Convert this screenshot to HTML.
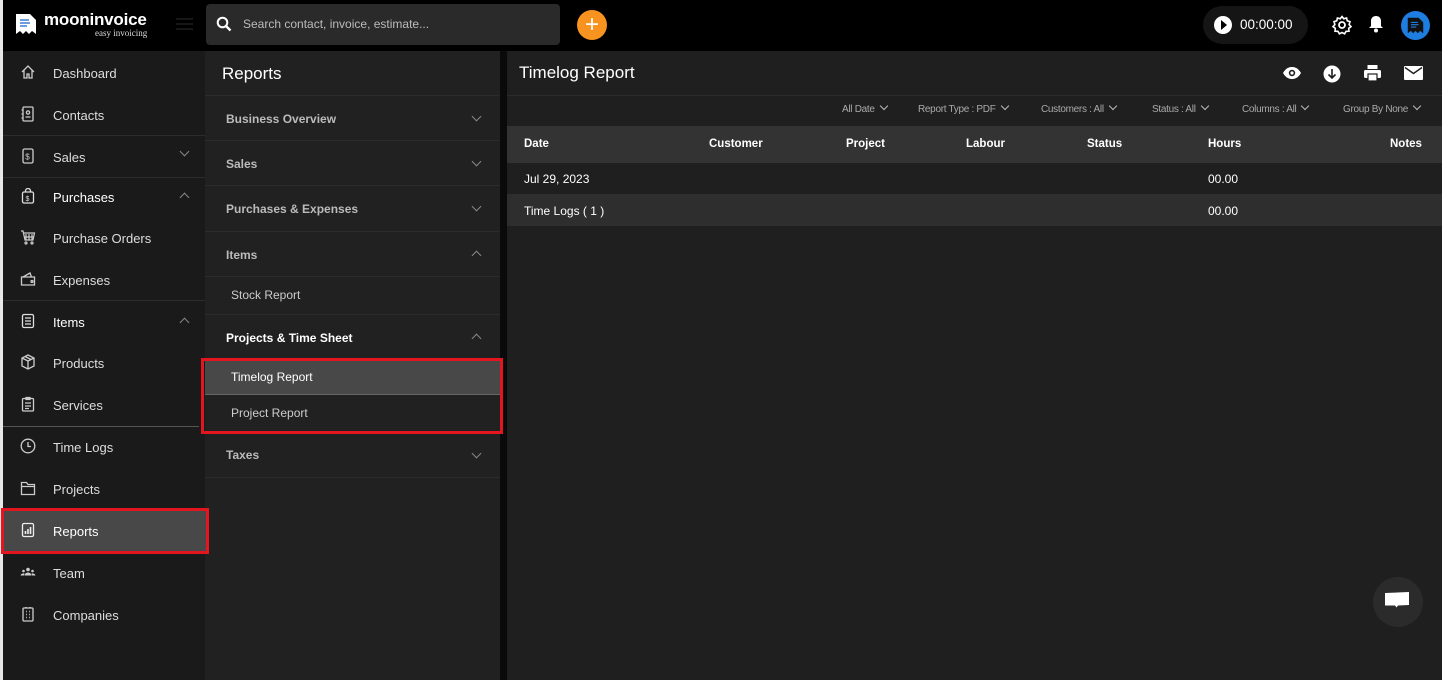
<!DOCTYPE html>
<html><head><meta charset="utf-8"><style>
*{margin:0;padding:0;box-sizing:border-box}
body{width:1442px;height:680px;background:#1f1f1f;font-family:"Liberation Sans",sans-serif;position:relative;overflow:hidden;color:#ddd}
.a{position:absolute}
.top{left:0;top:0;width:1442px;height:51px;background:#000}
.side{left:3px;top:51px;width:202px;height:629px;background:#1a1a1a}
.strip{left:0;top:0;width:3px;height:680px;background:#e8e8e8}
.menu{left:205px;top:51px;width:295px;height:629px;background:#212121}
.div{left:500px;top:51px;width:7px;height:629px;background:#0a0a0a}
.si{position:absolute;left:0;width:202px;height:42px;font-size:13px;color:#ddd}
.si span{position:absolute;left:50px;top:14px}
.si svg{position:absolute;left:17px;top:12px}
.chev{position:absolute;width:7px;height:7px;border-right:1.3px solid #888;border-bottom:1.3px solid #888}
.dn{transform:rotate(45deg)}
.up{transform:rotate(-135deg)}
.mi{position:absolute;left:0;width:295px;height:45px;border-bottom:1px solid #2c2c2c;font-size:12px;font-weight:bold;color:#bbb}
.mi span{position:absolute;left:21px;top:16px}
.mi .chev{left:268px;top:17px}
.th{font-size:11.5px;font-weight:bold;color:#fff;position:absolute;top:138px}
.f{position:absolute;top:104px;font-size:10px;color:#aaa;letter-spacing:-.3px}
.f::after{content:"";display:inline-block;width:5px;height:5px;border-right:1.4px solid #bbb;border-bottom:1.4px solid #bbb;transform:rotate(45deg);margin-left:6px;position:relative;top:-3px}
</style></head><body>
<div class="a top"></div>
<div class="a side"></div>
<div class="a strip"></div>
<div class="a menu"></div>
<div class="a div"></div>

<svg class="a" style="left:15px;top:13px" width="22" height="22" viewBox="0 0 22 22"><path d="M1 1h14l6 6v14l-4-3-3 3-3-3-3 3-3-3-4 3z" fill="#fff"/><path d="M5 7h9M5 10h10M5 13h7" stroke="#3b7dd8" stroke-width="1.5"/></svg>
<div class="a" style="left:44px;top:10px;font-size:17px;font-weight:bold;color:#fff;letter-spacing:-.2px">mooninvoice</div>
<div class="a" style="left:95px;top:28px;font-size:9px;color:#ddd;font-family:'Liberation Serif',serif">easy invoicing</div>
<div class="a" style="left:176px;top:18px;width:17px;height:2px;background:#161616;box-shadow:0 5px 0 #161616,0 10px 0 #161616"></div>
<div class="a" style="left:206px;top:4px;width:354px;height:41px;background:#2a2a2a;border-radius:4px"></div>
<svg class="a" style="left:216px;top:16px" width="16" height="16" viewBox="0 0 16 16"><circle cx="6.5" cy="6.5" r="4.8" stroke="#fff" stroke-width="2" fill="none"/><path d="M10 10l4.5 4.5" stroke="#fff" stroke-width="2.4"/></svg>
<div class="a" style="left:243px;top:17px;font-size:12px;color:#bbb">Search contact, invoice, estimate...</div>
<div class="a" style="left:577px;top:10px;width:30px;height:30px;border-radius:50%;background:#f7931e;color:#fff;font-size:24px;line-height:29px;text-align:center">+</div>
<div class="a" style="left:1203px;top:6px;width:105px;height:38px;border-radius:19px;background:#151515"></div>
<div class="a" style="left:1214px;top:16px;width:18px;height:18px;border-radius:50%;background:#fff"></div>
<div class="a" style="left:1221px;top:20px;width:0;height:0;border-left:6px solid #000;border-top:5px solid transparent;border-bottom:5px solid transparent"></div>
<div class="a" style="left:1240px;top:17px;font-size:13.5px;color:#fff">00:00:00</div>
<svg class="a" style="left:1332px;top:15px" width="20" height="20" viewBox="0 0 20 20"><circle cx="10" cy="10" r="3" stroke="#fff" stroke-width="1.8" fill="none"/><path d="M10 1.5l1.8 2.3 2.8-.8.6 2.8 2.8.9-.9 2.8 1.9 2.1-2.3 1.7.3 2.9-2.9.1-1.5 2.5-2.6-1.3-2.6 1.3-1.5-2.5-2.9-.1.3-2.9-2.3-1.7 1.9-2.1-.9-2.8 2.8-.9.6-2.8 2.8.8z" stroke="#fff" stroke-width="1.6" fill="none"/></svg>
<svg class="a" style="left:1368px;top:15px" width="16" height="18" viewBox="0 0 16 18"><path d="M8 1c3 0 5 2 5 5v5l2 2H1l2-2V6c0-3 2-5 5-5z" fill="#fff"/><circle cx="8" cy="15.5" r="2" fill="#fff"/></svg>
<div class="a" style="left:1401px;top:11px;width:29px;height:29px;border-radius:50%;background:#1e7de0"></div>
<svg class="a" style="left:1407px;top:16px" width="17" height="19" viewBox="0 0 22 22"><path d="M1 1h14l6 6v14l-4-3-3 3-3-3-3 3-3-3-4 3z" fill="#111"/><path d="M5 7h9M5 10h10M5 13h7" stroke="#1e7de0" stroke-width="1.5"/></svg>

<div class="a" style="left:3px;top:51px;width:202px;height:629px">
<div class="si" style="top:1px"><svg width="16" height="16" viewBox="0 0 16 16" fill="none" stroke="#ccc" stroke-width="1.3"><path d="M2 8l6-6 6 6M4 6.5V14h3v-4h2v4h3V6.5"/></svg><span>Dashboard</span></div>
<div class="si" style="top:43px;border-bottom:1px solid #2c2c2c"><svg width="16" height="16" viewBox="0 0 16 16" fill="none" stroke="#ccc" stroke-width="1.3"><rect x="3" y="1" width="10" height="14" rx="1"/><circle cx="8" cy="6.5" r="1.6"/><path d="M5.5 11h5M1.5 4h2M1.5 8h2M1.5 12h2"/></svg><span>Contacts</span></div>
<div class="si" style="top:85px;border-bottom:1px solid #2c2c2c"><svg width="16" height="16" viewBox="0 0 16 16" fill="none" stroke="#ccc" stroke-width="1.3"><rect x="3" y="1" width="10" height="14" rx="1.5"/><text x="5.2" y="11.5" font-size="8" fill="#ccc" stroke="none" font-family="Liberation Sans">$</text></svg><span>Sales</span><i class="chev dn" style="left:178px;top:12px"></i></div>
<div class="si" style="top:125px"><svg width="16" height="16" viewBox="0 0 16 16" fill="none" stroke="#ddd" stroke-width="1.3"><rect x="2.5" y="4" width="11" height="11" rx="1.5"/><path d="M5.5 4V3a2.5 2.5 0 015 0v1"/><text x="5.5" y="13" font-size="7" fill="#ddd" stroke="none" font-family="Liberation Sans">$</text></svg><span style="color:#fff">Purchases</span><i class="chev up" style="left:178px;top:18px"></i></div>
<div class="si" style="top:166px"><svg width="16" height="16" viewBox="0 0 16 16" fill="none" stroke="#ccc" stroke-width="1.2"><path d="M1 2h2l2 9h8l1.5-7H4M6 5v6M9 5v6M12 5v6M4.5 8h9.5"/><circle cx="6" cy="14" r="1"/><circle cx="12" cy="14" r="1"/></svg><span>Purchase Orders</span></div>
<div class="si" style="top:208px;border-bottom:1px solid #2c2c2c"><svg width="16" height="16" viewBox="0 0 16 16" fill="none" stroke="#ccc" stroke-width="1.3"><path d="M1.5 6h13v8h-13zM3 6l7-4 1.5 4"/><circle cx="12" cy="10.5" r="1"/></svg><span>Expenses</span></div>
<div class="si" style="top:250px"><svg width="16" height="16" viewBox="0 0 16 16" fill="none" stroke="#ddd" stroke-width="1.3"><rect x="2.5" y="1.5" width="11" height="13" rx="1.5"/><path d="M5 5h6M5 8h6M5 11h6"/></svg><span style="color:#fff">Items</span><i class="chev up" style="left:178px;top:18px"></i></div>
<div class="si" style="top:291px"><svg width="16" height="16" viewBox="0 0 16 16" fill="none" stroke="#ccc" stroke-width="1.3"><path d="M8 1l6 3v8l-6 3-6-3V4zM2 4l6 3 6-3M8 7v8M5 2.5l6 3"/></svg><span>Products</span></div>
<div class="si" style="top:333px"><svg width="16" height="16" viewBox="0 0 16 16" fill="none" stroke="#ccc" stroke-width="1.3"><rect x="2.5" y="2.5" width="11" height="12.5" rx="1"/><path d="M6 1.5h4v2H6zM5 7h6M5 10h6M5 12.5h4"/></svg><span>Services</span></div>
<div style="position:absolute;left:0;top:375px;width:196px;height:1px;background:#555"></div>
<div class="si" style="top:375px"><svg width="16" height="16" viewBox="0 0 16 16" fill="none" stroke="#ccc" stroke-width="1.3"><circle cx="8" cy="8" r="6.8"/><path d="M8 4v4.5h3"/></svg><span>Time Logs</span></div>
<div class="si" style="top:417px"><svg width="16" height="16" viewBox="0 0 16 16" fill="none" stroke="#ccc" stroke-width="1.3"><path d="M1.5 2.5h5l1.5 2h6.5v10h-13zM1.5 6.5h13"/></svg><span>Projects</span></div>
<div class="si" style="top:459px;background:#484848;height:42px;outline:3px solid #e3151f;outline-offset:-1px;width:204px"><svg width="16" height="16" viewBox="0 0 16 16" fill="none" stroke="#eee" stroke-width="1.3"><rect x="2.5" y="1.5" width="11" height="13" rx="1.5"/><path d="M5.5 12V9M8 12V7M10.5 12V5" stroke-width="1.6"/></svg><span style="color:#fff">Reports</span></div>
<div class="si" style="top:501px"><svg width="16" height="16" viewBox="0 0 16 16" fill="#ccc"><circle cx="8" cy="5.5" r="1.8"/><circle cx="3.5" cy="7" r="1.3"/><circle cx="12.5" cy="7" r="1.3"/><path d="M4.5 11.5a3.5 3 0 017 0zM0.5 11.5a3 2.5 0 014-2l-.5 2zM15.5 11.5a3 2.5 0 00-4-2l.5 2z"/></svg><span>Team</span></div>
<div class="si" style="top:543px"><svg width="16" height="16" viewBox="0 0 16 16" fill="none" stroke="#ccc" stroke-width="1.3"><rect x="3" y="2" width="10" height="13" rx="1"/><path d="M6 1v1.5M10 1v1.5M6 5.5h.8M9.2 5.5h.8M6 8.5h.8M9.2 8.5h.8M6 11.5h.8M9.2 11.5h.8" stroke-width="1.6"/></svg><span>Companies</span></div>
</div>

<div class="a" style="left:205px;top:51px;width:295px;height:629px">
<div class="mi" style="top:0;height:45px"><span style="left:17px;top:13px;font-size:17px;font-weight:normal;color:#fff">Reports</span></div>
<div class="mi" style="top:45px"><span>Business Overview</span><i class="chev dn"></i></div>
<div class="mi" style="top:90px"><span>Sales</span><i class="chev dn"></i></div>
<div class="mi" style="top:135px;height:46px"><span>Purchases &amp; Expenses</span><i class="chev dn"></i></div>
<div class="mi" style="top:181px"><span>Items</span><i class="chev up" style="top:20px"></i></div>
<div class="mi" style="top:226px;height:38px"><span style="left:26px;top:11px;font-weight:normal;color:#ccc">Stock Report</span></div>
<div class="mi" style="top:264px;height:44px;border:none"><span style="color:#fff">Projects &amp; Time Sheet</span><i class="chev up" style="top:20px"></i></div>
<div class="mi" style="top:309px;height:35px;background:#484848;border-bottom:1px solid #666"><span style="left:26px;top:10px;font-weight:normal;color:#fff">Timelog Report</span></div>
<div class="mi" style="top:344px;height:36px;border:none"><span style="left:26px;top:11px;font-weight:normal;color:#ccc">Project Report</span></div>
<div style="position:absolute;left:-4px;top:307px;width:302px;height:76px;border:3px solid #e3151f"></div>
<div class="mi" style="top:382px;height:45px"><span style="top:15px">Taxes</span><i class="chev dn"></i></div>
</div>

<div class="a" style="left:519px;top:63px;font-size:17px;color:#fff">Timelog Report</div>
<div class="a" style="left:507px;top:95px;width:935px;height:1px;background:#2c2c2c"></div>
<svg class="a" style="left:1282px;top:65px" width="20" height="16" viewBox="0 0 20 16"><path d="M1 8c3-5 6-6 9-6s6 1 9 6c-3 5-6 6-9 6s-6-1-9-6z" fill="#fff"/><circle cx="10" cy="8" r="3.2" fill="#1f1f1f"/><circle cx="10" cy="8" r="1.6" fill="#fff"/></svg>
<svg class="a" style="left:1323px;top:65px" width="18" height="18" viewBox="0 0 18 18"><circle cx="9" cy="9" r="8.5" fill="#fff"/><path d="M9 4v9M5.5 9.5L9 13l3.5-3.5" stroke="#1f1f1f" stroke-width="1.6" fill="none"/></svg>
<svg class="a" style="left:1363px;top:64px" width="19" height="18" viewBox="0 0 19 18"><rect x="4.5" y="1" width="10" height="4" fill="#fff"/><rect x="1" y="6" width="17" height="8" rx="1.5" fill="#fff"/><rect x="5" y="10" width="9" height="7" fill="#fff" stroke="#1f1f1f" stroke-width="1.2"/></svg>
<svg class="a" style="left:1404px;top:66px" width="19" height="14" viewBox="0 0 19 14"><rect width="19" height="14" rx="1" fill="#fff"/><path d="M1 1.5l8.5 6 8.5-6" stroke="#1f1f1f" stroke-width="1.4" fill="none"/></svg>

<span class="f" style="left:842px">All Date</span>
<span class="f" style="left:918px">Report Type : PDF</span>
<span class="f" style="left:1041px">Customers : All</span>
<span class="f" style="left:1152px">Status : All</span>
<span class="f" style="left:1242px">Columns : All</span>
<span class="f" style="left:1343px">Group By None</span>

<div class="a" style="left:507px;top:126px;width:935px;height:37px;background:#333"></div>
<div class="a" style="left:507px;top:194px;width:935px;height:32px;background:#2e2e2e"></div>
<span class="th" style="left:524px">Date</span>
<span class="th" style="left:709px">Customer</span>
<span class="th" style="left:846px">Project</span>
<span class="th" style="left:966px">Labour</span>
<span class="th" style="left:1087px">Status</span>
<span class="th" style="left:1208px">Hours</span>
<span class="th" style="left:1390px">Notes</span>
<div class="a" style="left:524px;top:172px;font-size:12px;color:#fff">Jul 29, 2023</div>
<div class="a" style="left:1208px;top:172px;font-size:12px;color:#fff">00.00</div>
<div class="a" style="left:524px;top:204px;font-size:12px;color:#fff">Time Logs ( 1 )</div>
<div class="a" style="left:1208px;top:204px;font-size:12px;color:#fff">00.00</div>

<div class="a" style="left:1373px;top:577px;width:50px;height:50px;border-radius:50%;background:#2b2b2b"></div>
<svg class="a" style="left:1384px;top:591px" width="27" height="22" viewBox="0 0 27 22"><path d="M1 2l24-1v13l-11 .5-1.5 2-1.5-2H1z" fill="#fff"/></svg>
</body></html>
